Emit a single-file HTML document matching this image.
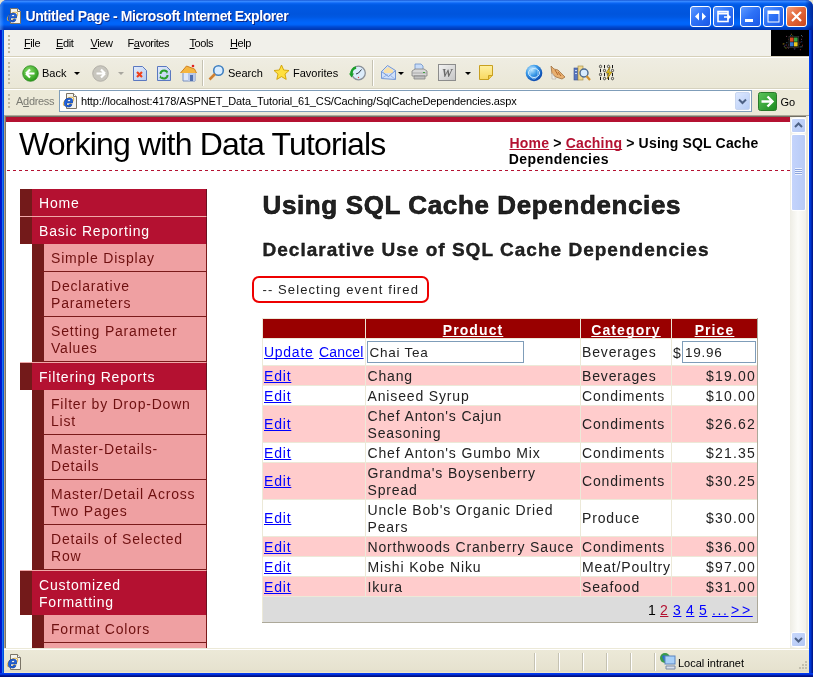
<!DOCTYPE html>
<html><head><meta charset="utf-8">
<style>
*{margin:0;padding:0;box-sizing:border-box}
html,body{width:813px;height:677px;overflow:hidden;background:#e6e3d0;font-family:"Liberation Sans",sans-serif}
.a{position:absolute}
#win{position:absolute;left:0;top:0;width:813px;height:677px;background:#0a3fd6;border-radius:7px 7px 0 0;overflow:hidden;will-change:transform}
#page{left:6px;top:117px;width:784px;height:531px;background:#fff;overflow:hidden;color:#222}
.top{background:linear-gradient(to right,#731a1a 12px,#b41131 12px);color:#fff;border-top:1px solid #f0a8a8;border-right:1px solid #6a1020;padding:6px 0 4px 19px;font-size:14px;line-height:17px;letter-spacing:0.8px;white-space:nowrap}
.nav0 .top:first-child{border-top:0}
.sub{margin-left:12px;background:#efa0a2;color:#6e1010;border-left:12px solid #731a1a;border-bottom:1px solid #7a1a1a;border-right:1px solid #7a1a1a;padding:6px 0 4px 7px;font-size:14px;line-height:17px;letter-spacing:0.8px;white-space:nowrap}
.bcl{color:#b41131;text-decoration:underline}
.th{color:#fff;font-weight:bold;font-size:14px;line-height:15px;text-align:center;letter-spacing:1.1px;white-space:nowrap}
.th u{text-decoration:underline}
.lk{color:#0000ff;text-decoration:underline}
u,a{text-decoration-skip-ink:none}
.inp{border:1px solid #7f9db9;background:#fff}

#title{left:0;top:0;width:813px;height:30px;background:linear-gradient(to bottom,#0a44c8 0px,#3d8eff 1px,#2c80ff 2px,#0c66f4 3px,#0059e4 5px,#0055dd 14px,#0058e2 17px,#0060f2 20px,#0066fc 23px,#0062f6 25px,#0052e0 26px,#0042c4 28px,#0036b0 30px)}
#ttext{left:25.5px;top:9.3px;font:bold 14px/15px "Liberation Sans",sans-serif;color:#fff;text-shadow:1px 1px 0 #0f2a8a;white-space:nowrap;letter-spacing:-0.42px}
.tbtn{top:6px;width:21px;height:21px;border:1px solid #fff;border-radius:3px;background:linear-gradient(135deg,#5f9bff 0%,#2e72f7 45%,#1b58e6 100%)}
#lframe{left:0;top:30px;width:4px;height:647px;background:linear-gradient(to right,#0014c8 0,#0018d0 2px,#1a70f0 2px,#1a70f0 3px,#0050e0 3px)}
#rframe{left:809px;top:30px;width:4px;height:647px;background:linear-gradient(to right,#0040f0 0,#0040f0 1px,#0036d4 1px,#0036d4 2px,#0028b0 2px,#0028b0 3px,#001890 3px)}
#bframe{left:0;top:673px;width:813px;height:4px;background:linear-gradient(to bottom,#0038f0 0,#0038f0 1px,#0030d8 1px,#0030d8 2px,#0018a0 2px,#0018a0 3px,#001080 3px)}
#chrome{left:4px;top:30px;width:805px;height:642px;background:#ece9d8}
.tt{position:absolute;font-size:11px;line-height:13px;color:#000;white-space:nowrap}
.tt u{text-decoration:underline}
.grip{position:absolute;left:8px;width:2px;background:repeating-linear-gradient(to bottom,#bcb6a0 0 2px,transparent 2px 4px)}
.dd{position:absolute;width:0;height:0;border-left:3px solid transparent;border-right:3px solid transparent;border-top:3px solid #000}
.sep{position:absolute;width:2px;background:linear-gradient(to right,#c5c2b2 1px,#fff 1px)}
.ssep{position:absolute;top:653px;width:2px;height:18px;background:linear-gradient(to right,#c5c2b2 1px,#fff 1px)}
</style></head><body>
<div id="win">
<div id="title" class="a"></div>
<svg class="a" style="left:6px;top:8px;" width="16" height="16" viewBox="0 0 16 16"><path d="M4.5 0.5h7l3 3v12h-10z" fill="#f4f3ee" stroke="#7a7466"/><path d="M11.5 0.5v3h3" fill="#fff" stroke="#7a7466"/><ellipse cx="6.5" cy="8.5" rx="6" ry="3" transform="rotate(-35 6.5 8.5)" fill="none" stroke="#e0b040" stroke-width="1"/><text x="6.5" y="13.8" font-family="Liberation Sans" font-weight="bold" font-style="italic" font-size="17" text-anchor="middle" fill="#1f62e0" stroke="#0a3a9a" stroke-width="0.5">e</text></svg>
<div class="a" style="left:805px;top:0;width:8px;height:30px;background:linear-gradient(to right,rgba(0,40,160,0),rgba(0,30,140,0.85))"></div>
<div class="a" style="left:0;top:0;width:4px;height:30px;background:linear-gradient(to right,rgba(120,180,255,0.5),rgba(0,0,0,0))"></div>
<div id="ttext" class="a">Untitled Page - Microsoft Internet Explorer</div>
<div class="a tbtn" style="left:690px"></div>
<div class="a tbtn" style="left:713px"></div>
<div class="a tbtn" style="left:740px"></div>
<div class="a tbtn" style="left:763px"></div>
<div class="a tbtn" style="left:786px;background:linear-gradient(135deg,#f3a080 0%,#e3683a 45%,#c9471c 100%)"></div>
<svg class="a" style="left:690px;top:6px;" width="21" height="21" viewBox="0 0 21 21"><path d="M5 10.5l4-4v8z M16 10.5l-4-4v8z" fill="#fff"/></svg>
<svg class="a" style="left:713px;top:6px;" width="21" height="21" viewBox="0 0 21 21"><rect x="5" y="5.5" width="10" height="10" fill="none" stroke="#fff" stroke-width="1.6"/><path d="M5 7.5h10" stroke="#fff" stroke-width="2"/><path d="M11 11h6M14.5 8.8l2.5 2.2-2.5 2.2" stroke="#fff" stroke-width="1.5" fill="none"/></svg>
<svg class="a" style="left:740px;top:6px;" width="21" height="21" viewBox="0 0 21 21"><rect x="5" y="13" width="8" height="3" fill="#fff"/></svg>
<svg class="a" style="left:763px;top:6px;" width="21" height="21" viewBox="0 0 21 21"><rect x="5" y="5" width="11" height="11" fill="none" stroke="#fff" stroke-width="1"/><rect x="5" y="5" width="11" height="3" fill="#fff"/></svg>
<svg class="a" style="left:786px;top:6px;" width="21" height="21" viewBox="0 0 21 21"><path d="M6 6l9 9M15 6l-9 9" stroke="#fff" stroke-width="2.2"/></svg>
<div id="lframe" class="a"></div><div id="rframe" class="a"></div><div id="bframe" class="a"></div>
<div id="chrome" class="a"></div>
<div class="a" style="left:4px;top:30px;width:805px;height:26px;background:#f1f0ea"></div>
<div class="a" style="left:4px;top:56px;width:805px;height:1px;background:#d6d0ba"></div>
<div class="a" style="left:4px;top:57px;width:805px;height:1px;background:#fff"></div>
<div class="grip" style="top:35px;height:18px"></div>
<div class="tt" style="left:24px;top:37px;letter-spacing:-0.4px"><u>F</u>ile</div>
<div class="tt" style="left:56px;top:37px;letter-spacing:-0.4px"><u>E</u>dit</div>
<div class="tt" style="left:90.5px;top:37px;letter-spacing:-0.4px"><u>V</u>iew</div>
<div class="tt" style="left:127.5px;top:37px;letter-spacing:-0.4px">F<u>a</u>vorites</div>
<div class="tt" style="left:189.5px;top:37px;letter-spacing:-0.4px"><u>T</u>ools</div>
<div class="tt" style="left:230px;top:37px;letter-spacing:-0.4px"><u>H</u>elp</div>
<div class="a" style="left:771px;top:30px;width:38px;height:26px;background:#000"></div>
<svg class="a" style="left:777px;top:31px;" width="26" height="24" viewBox="0 0 26 24"><rect x="17.2" y="17.6" width="1" height="1" fill="#4060c0" opacity="0.7"/><rect x="24.0" y="7.8" width="1" height="1" fill="#a06080" opacity="0.7"/><rect x="21.6" y="12.6" width="1" height="1" fill="#c0a020" opacity="0.7"/><rect x="16.1" y="16.1" width="1" height="1" fill="#60a0c0" opacity="0.7"/><rect x="5.7" y="12.5" width="1" height="1" fill="#c0a020" opacity="0.7"/><rect x="7.6" y="15.9" width="1" height="1" fill="#40a040" opacity="0.7"/><rect x="9.1" y="4.9" width="1" height="1" fill="#a06080" opacity="0.7"/><rect x="12.2" y="13.6" width="1" height="1" fill="#c04040" opacity="0.7"/><rect x="22.9" y="18.2" width="1" height="1" fill="#c04040" opacity="0.7"/><rect x="14.7" y="14.9" width="1" height="1" fill="#4060c0" opacity="0.7"/><rect x="6.4" y="12.3" width="1" height="1" fill="#c0a020" opacity="0.7"/><rect x="13.9" y="2.8" width="1" height="1" fill="#c0a020" opacity="0.7"/><rect x="15.2" y="4.3" width="1" height="1" fill="#40a040" opacity="0.7"/><rect x="20.9" y="7.9" width="1" height="1" fill="#40a040" opacity="0.7"/><rect x="9.3" y="11.2" width="1" height="1" fill="#60a0c0" opacity="0.7"/><rect x="7.6" y="13.7" width="1" height="1" fill="#4060c0" opacity="0.7"/><rect x="6.8" y="14.8" width="1" height="1" fill="#a06080" opacity="0.7"/><rect x="11.0" y="16.5" width="1" height="1" fill="#a06080" opacity="0.7"/><rect x="17.4" y="16.6" width="1" height="1" fill="#c04040" opacity="0.7"/><rect x="24.0" y="4.1" width="1" height="1" fill="#60a0c0" opacity="0.7"/><rect x="13.1" y="4.1" width="1" height="1" fill="#4060c0" opacity="0.7"/><rect x="27.7" y="9.2" width="1" height="1" fill="#a06080" opacity="0.7"/><rect x="24.3" y="15.3" width="1" height="1" fill="#60a0c0" opacity="0.7"/><rect x="21.1" y="5.1" width="1" height="1" fill="#4060c0" opacity="0.7"/><rect x="22.7" y="15.4" width="1" height="1" fill="#60a0c0" opacity="0.7"/><rect x="22.6" y="10.7" width="1" height="1" fill="#c04040" opacity="0.7"/><rect x="11.0" y="13.5" width="1" height="1" fill="#4060c0" opacity="0.7"/><rect x="9.1" y="13.6" width="1" height="1" fill="#c04040" opacity="0.7"/><rect x="25.7" y="12.9" width="1" height="1" fill="#c04040" opacity="0.7"/><rect x="9.8" y="15.7" width="1" height="1" fill="#a06080" opacity="0.7"/><rect x="25.3" y="5.1" width="1" height="1" fill="#a06080" opacity="0.7"/><rect x="17.0" y="15.2" width="1" height="1" fill="#c04040" opacity="0.7"/><rect x="24.9" y="14.2" width="1" height="1" fill="#c04040" opacity="0.7"/><rect x="27.8" y="8.3" width="1" height="1" fill="#4060c0" opacity="0.7"/><rect x="11.5" y="8.0" width="1" height="1" fill="#c04040" opacity="0.7"/><rect x="24.2" y="10.3" width="1" height="1" fill="#4060c0" opacity="0.7"/><rect x="27.5" y="8.9" width="1" height="1" fill="#c0a020" opacity="0.7"/><rect x="8.5" y="16.7" width="1" height="1" fill="#c0a020" opacity="0.7"/><rect x="12" y="5.5" width="9.5" height="11" fill="#000" stroke="#303030" stroke-width="0.8"/><rect x="13" y="6.5" width="3.6" height="4.2" fill="#d84a20"/><rect x="17" y="6.5" width="3.6" height="4.2" fill="#3aa040"/><rect x="13" y="11.2" width="3.6" height="4.2" fill="#3a78d0"/><rect x="17" y="11.2" width="3.6" height="4.2" fill="#e8c820"/></svg>
<div class="a" style="left:4px;top:58px;width:805px;height:30px;background:linear-gradient(to bottom,#efede2,#eae7d6)"></div>
<div class="a" style="left:4px;top:88px;width:805px;height:1px;background:#d6d2bf"></div>
<div class="a" style="left:4px;top:89px;width:805px;height:1px;background:#fff"></div>
<div class="grip" style="top:62px;height:22px"></div>
<svg class="a" style="left:22px;top:65px;" width="17" height="17" viewBox="0 0 17 17"><defs><radialGradient id="gb" cx="40%" cy="35%" r="65%"><stop offset="0" stop-color="#8be06a"/><stop offset="1" stop-color="#2a9a1a"/></radialGradient></defs><circle cx="8.5" cy="8.5" r="7.8" fill="url(#gb)" stroke="#2f8a22" stroke-width="0.8"/><path d="M4 8.5h8.5M4 8.5l4-4M4 8.5l4 4" stroke="#fff" stroke-width="2.2" fill="none"/></svg>
<div class="tt" style="left:42px;top:66.5px">Back</div>
<div class="dd" style="left:74px;top:72px"></div>
<svg class="a" style="left:92px;top:65px;" width="17" height="17" viewBox="0 0 17 17"><circle cx="8.5" cy="8.5" r="7.8" fill="#c8c6be" stroke="#a8a69e" stroke-width="0.8"/><path d="M13 8.5h-8.5M13 8.5l-4-4M13 8.5l-4 4" stroke="#fff" stroke-width="2.2" fill="none"/></svg>
<div class="dd" style="left:118px;top:72px;border-top-color:#a8a69e"></div>
<svg class="a" style="left:132px;top:65px;" width="16" height="17" viewBox="0 0 16 17"><defs><linearGradient id="pg" x1="0" y1="0" x2="1" y2="1"><stop offset="0" stop-color="#e4ecfa"/><stop offset="1" stop-color="#b8ccf0"/></linearGradient></defs><path d="M1.5 1.5h9l4 4v10h-13z" fill="url(#pg)" stroke="#5a78c0"/><path d="M5 7l5 5M10 7l-5 5" stroke="#f0401a" stroke-width="2.2"/></svg>
<svg class="a" style="left:156px;top:65px;" width="16" height="17" viewBox="0 0 16 17"><path d="M1.5 1.5h9l4 4v10h-13z" fill="url(#pg)" stroke="#5a78c0"/><path d="M4.5 9 a3.5 3.5 0 0 1 6 -2.5M11.5 10 a3.5 3.5 0 0 1 -6 2.5" stroke="#2aa02a" stroke-width="2" fill="none"/><path d="M9 5l3 1-1 3z M6.5 14l-3-1 1-3z" fill="#2aa02a"/></svg>
<svg class="a" style="left:180px;top:64px;" width="17" height="18" viewBox="0 0 17 18"><path d="M3 8l5-4 7 4v9h-12z" fill="#dfe8f8" stroke="#7890c0"/><path d="M8 8l7 0v9h-7z" fill="#b8c8ea"/><path d="M0.5 9l6-7 8 3 2 4" fill="#f5b640" stroke="#d08020" stroke-width="1"/><circle cx="13" cy="2" r="1.3" fill="#e02020"/><rect x="10" y="11" width="3" height="6" fill="#5070b0"/></svg>
<div class="sep" style="left:202px;top:60px;height:26px"></div>
<svg class="a" style="left:208px;top:64px;" width="17" height="17" viewBox="0 0 17 17"><circle cx="10.5" cy="6.5" r="4.8" fill="#d8ecff" stroke="#4080c0" stroke-width="1.6"/><path d="M7 10l-5.5 5.5" stroke="#d08030" stroke-width="2.6"/></svg>
<div class="tt" style="left:228px;top:66.5px">Search</div>
<svg class="a" style="left:273px;top:64px;" width="17" height="17" viewBox="0 0 17 17"><path d="M8.5 1l2.2 5 5.3 0.5-4 3.6 1.2 5.3-4.7-2.8-4.7 2.8 1.2-5.3-4-3.6 5.3-0.5z" fill="#ffe040" stroke="#d0a000" stroke-width="0.9"/></svg>
<div class="tt" style="left:293px;top:66.5px">Favorites</div>
<svg class="a" style="left:349px;top:64px;" width="17" height="18" viewBox="0 0 17 18"><circle cx="9.5" cy="9" r="6.8" fill="#dcecfa" stroke="#8a9098" stroke-width="1.3"/><path d="M9.5 9l3-3.5M9.5 9l-2.5 1" stroke="#303a48" stroke-width="1"/><circle cx="9.5" cy="13.5" r="0.7" fill="#e04040"/><path d="M7 3.5a6 6 0 0 0-4.5 6.5" stroke="#1aa02a" stroke-width="2.6" fill="none"/><path d="M0 9.5l5 0-2.5 4z" fill="#1aa02a"/></svg>
<div class="sep" style="left:372px;top:60px;height:26px"></div>
<svg class="a" style="left:380px;top:64px;" width="17" height="17" viewBox="0 0 17 17"><path d="M1.5 7.5l6-6 8 5v9l-14-1z" fill="#cfe0fa" stroke="#6a8ed0" stroke-width="0.9"/><path d="M4 6l4-3 5 3v3h-9z" fill="#f8e0a8"/><path d="M1.5 7.5l7 5 7-6" fill="none" stroke="#6a8ed0" stroke-width="0.9"/><path d="M1.5 14.5l6-4M15.5 15.5l-5-4" stroke="#8aa8e0" stroke-width="0.8"/></svg>
<div class="dd" style="left:398px;top:72px"></div>
<svg class="a" style="left:411px;top:63px;" width="17" height="18" viewBox="0 0 17 18"><path d="M4 1h6l2 2v5h-8z" fill="#c8dcf8" stroke="#6a90c8" stroke-width="0.8"/><path d="M1 8l3-2h9l3 2v5h-15z" fill="#d8d8d8" stroke="#808080" stroke-width="0.8"/><path d="M1 10h15" stroke="#a0a0a0" stroke-width="0.8"/><path d="M3 13h11v3h-11z" fill="#c0c0c0" stroke="#808080" stroke-width="0.8"/><rect x="12" y="9" width="2" height="1" fill="#40a040"/></svg>
<svg class="a" style="left:438px;top:64px;" width="18" height="17" viewBox="0 0 18 17"><defs><linearGradient id="wg" x1="0" y1="0" x2="1" y2="1"><stop offset="0" stop-color="#f4f4f4"/><stop offset="1" stop-color="#c4c4c4"/></linearGradient></defs><rect x="0.5" y="0.5" width="17" height="16" fill="url(#wg)" stroke="#8c8c8c"/><text x="9" y="13" font-family="Liberation Serif" font-style="italic" font-weight="bold" font-size="12" text-anchor="middle" fill="#6a6a6a">W</text></svg>
<div class="dd" style="left:465px;top:72px"></div>
<svg class="a" style="left:478px;top:64px;" width="16" height="17" viewBox="0 0 16 17"><defs><linearGradient id="ng" x1="0" y1="0" x2="0" y2="1"><stop offset="0" stop-color="#fff0a0"/><stop offset="1" stop-color="#f8d860"/></linearGradient></defs><path d="M1.5 1.5h13v10l-4 4h-9z" fill="url(#ng)" stroke="#c8a020"/><path d="M10.5 15.5v-4h4" fill="#f0c840" stroke="#c8a020"/></svg>
<svg class="a" style="left:525px;top:64px;" width="18" height="18" viewBox="0 0 18 18"><defs><radialGradient id="bc" cx="35%" cy="30%" r="70%"><stop offset="0" stop-color="#c8ecff"/><stop offset="0.5" stop-color="#3a9ae8"/><stop offset="1" stop-color="#0a4ab0"/></radialGradient></defs><circle cx="9" cy="9" r="8.3" fill="url(#bc)"/><ellipse cx="9" cy="9" rx="5.5" ry="4.5" fill="none" stroke="#d0ecff" stroke-width="1"/><ellipse cx="9" cy="9" rx="4" ry="6" fill="none" stroke="#a0d4ff" stroke-width="0.8"/></svg>
<svg class="a" style="left:549px;top:64px;" width="17" height="17" viewBox="0 0 17 17"><path d="M2 2l3 3 4 1 4 4 3 3-3 2-6-2-4-3z" fill="#e8b070" stroke="#a07040" stroke-width="0.8"/><path d="M3 9l4 6h-4z" fill="#f4f0e8" stroke="#b0a8a0" stroke-width="0.6"/><path d="M6 6l3 5M9 8l3 4" stroke="#b06020" stroke-width="0.9"/></svg>
<svg class="a" style="left:573px;top:64px;" width="18" height="18" viewBox="0 0 18 18"><rect x="1" y="4" width="4" height="12" fill="#5a78c0" stroke="#3a5090" stroke-width="0.6"/><rect x="5" y="2" width="5" height="14" fill="#f0d890" stroke="#a08840" stroke-width="0.6"/><rect x="2" y="6" width="2" height="1" fill="#c8d8f8"/><rect x="2" y="9" width="2" height="1" fill="#c8d8f8"/><circle cx="11" cy="9" r="4" fill="#d8ecff" stroke="#4a6890" stroke-width="1.4"/><path d="M13.5 12l3.5 4" stroke="#d09030" stroke-width="2.2"/></svg>
<svg class="a" style="left:598px;top:64px;" width="17" height="17" viewBox="0 0 17 17"><ellipse cx="2.5" cy="2.5" rx="1.1" ry="1.3" fill="none" stroke="#111" stroke-width="0.7"/><rect x="6" y="1" width="1" height="3" fill="#111"/><ellipse cx="10.5" cy="2.5" rx="1.1" ry="1.3" fill="none" stroke="#111" stroke-width="0.7"/><rect x="14" y="1" width="1" height="3" fill="#111"/><rect x="2" y="5" width="1" height="3" fill="#111"/><ellipse cx="6.5" cy="6.5" rx="1.1" ry="1.3" fill="none" stroke="#111" stroke-width="0.7"/><rect x="10" y="5" width="1" height="3" fill="#111"/><ellipse cx="14.5" cy="6.5" rx="1.1" ry="1.3" fill="none" stroke="#111" stroke-width="0.7"/><ellipse cx="2.5" cy="10.5" rx="1.1" ry="1.3" fill="none" stroke="#111" stroke-width="0.7"/><rect x="6" y="9" width="1" height="3" fill="#111"/><ellipse cx="10.5" cy="10.5" rx="1.1" ry="1.3" fill="none" stroke="#111" stroke-width="0.7"/><rect x="14" y="9" width="1" height="3" fill="#111"/><rect x="2" y="13" width="1" height="3" fill="#111"/><ellipse cx="6.5" cy="14.5" rx="1.1" ry="1.3" fill="none" stroke="#111" stroke-width="0.7"/><rect x="10" y="13" width="1" height="3" fill="#111"/><ellipse cx="14.5" cy="14.5" rx="1.1" ry="1.3" fill="none" stroke="#111" stroke-width="0.7"/><path d="M12 3l-4 6h3l-2 6 5-7h-3z" fill="#f0d020" stroke="#806000" stroke-width="0.6"/></svg>
<div class="a" style="left:4px;top:90px;width:805px;height:26px;background:#ece9d8"></div>
<div class="grip" style="top:94px;height:15px"></div>
<div class="tt" style="left:16px;top:95px;color:#7a7a72;letter-spacing:-0.3px">A<u>d</u>dress</div>
<div class="a" style="left:59px;top:90px;width:693px;height:22px;background:#fff;border:1px solid #7f9db9"></div>
<svg class="a" style="left:62px;top:93px;" width="16" height="16" viewBox="0 0 16 16"><path d="M4.5 0.5h7l3 3v12h-10z" fill="#f4f3ee" stroke="#7a7466"/><path d="M11.5 0.5v3h3" fill="#fff" stroke="#7a7466"/><ellipse cx="6.5" cy="8.5" rx="6" ry="3" transform="rotate(-35 6.5 8.5)" fill="none" stroke="#e0b040" stroke-width="1"/><text x="6.5" y="13.8" font-family="Liberation Sans" font-weight="bold" font-style="italic" font-size="17" text-anchor="middle" fill="#1f62e0" stroke="#0a3a9a" stroke-width="0.5">e</text></svg>
<div class="tt" style="left:81px;top:95px;letter-spacing:-0.15px">http://localhost:4178/ASPNET_Data_Tutorial_61_CS/Caching/SqlCacheDependencies.aspx</div>
<div class="a" style="left:735px;top:92px;width:15px;height:18px;border-radius:2px;background:linear-gradient(135deg,#dce8ff,#b8cdf6);border:1px solid #c8d6f0"></div>
<svg class="a" style="left:735px;top:92px;" width="15" height="18" viewBox="0 0 15 18"><path d="M4 7.5l3.5 3.5 3.5-3.5" stroke="#4d6185" stroke-width="2" fill="none"/></svg>
<svg class="a" style="left:758px;top:92px;" width="19" height="19" viewBox="0 0 19 19"><defs><linearGradient id="go" x1="0" y1="0" x2="1" y2="1"><stop offset="0" stop-color="#5cc45a"/><stop offset="1" stop-color="#1a8a1e"/></linearGradient></defs><rect x="0.5" y="0.5" width="18" height="18" rx="2" fill="url(#go)" stroke="#2a7a2a"/><path d="M3.5 9.5h10.5M9.5 4.5l5 5-5 5" stroke="#fff" stroke-width="2.4" fill="none"/></svg>
<div class="tt" style="left:780.5px;top:95.5px;font-size:11px">Go</div>
<div class="a" style="left:4px;top:112px;width:805px;height:4px;background:#ece9d8"></div>
<div class="a" style="left:4px;top:115px;width:805px;height:1px;background:#aca899"></div>
<div class="a" style="left:4px;top:116px;width:1px;height:533px;background:#b0a488"></div>
<div class="a" style="left:5px;top:116px;width:804px;height:1px;background:#716f64"></div>
<div class="a" style="left:5px;top:116px;width:1px;height:532px;background:#7a766a"></div>
<div class="a" style="left:790px;top:117px;width:16px;height:531px;background:linear-gradient(to right,#eeede5,#fcfcf9 50%,#f2f1ea)"></div>
<div class="a" style="left:806px;top:116px;width:3px;height:533px;background:linear-gradient(to right,#eae6d8 0,#eae6d8 2px,#fffef0 2px)"></div>
<div class="a" style="left:791px;top:118px;width:15px;height:15px;border-radius:2px;border:1px solid #fff;background:linear-gradient(135deg,#c8d8fc,#b4c8f4)"></div>
<svg class="a" style="left:791px;top:118px;" width="15" height="15" viewBox="0 0 15 15"><path d="M4 9l3.5-3.5 3.5 3.5" stroke="#4d6185" stroke-width="2" fill="none"/></svg>
<div class="a" style="left:791px;top:134px;width:15px;height:77px;border-radius:2px;border:1px solid #fff;background:linear-gradient(to right,#c4d4fc,#b8cbf6)"></div>
<div class="a" style="left:795px;top:168px;width:7px;height:7px;background:repeating-linear-gradient(to bottom,#eef3ff 0 1px,#8ca4dc 1px 2px)"></div>
<div class="a" style="left:791px;top:632px;width:15px;height:15px;border-radius:2px;border:1px solid #fff;background:linear-gradient(135deg,#c8d8fc,#b4c8f4)"></div>
<svg class="a" style="left:791px;top:632px;" width="15" height="15" viewBox="0 0 15 15"><path d="M4 6l3.5 3.5 3.5-3.5" stroke="#4d6185" stroke-width="2" fill="none"/></svg>
<div class="a" style="left:4px;top:648px;width:805px;height:1px;background:#ece9d8"></div>
<div class="a" style="left:4px;top:649px;width:805px;height:1px;background:#fff"></div>
<div class="a" style="left:4px;top:650px;width:805px;height:23px;background:linear-gradient(to bottom,#ece9d8,#e6e2cf 20px,#d8d4c0 21px,#ece4c8 22px)"></div>
<svg class="a" style="left:6px;top:654px;" width="16" height="16" viewBox="0 0 16 16"><path d="M4.5 0.5h7l3 3v12h-10z" fill="#f4f3ee" stroke="#7a7466"/><path d="M11.5 0.5v3h3" fill="#fff" stroke="#7a7466"/><ellipse cx="6.5" cy="8.5" rx="6" ry="3" transform="rotate(-35 6.5 8.5)" fill="none" stroke="#e0b040" stroke-width="1"/><text x="6.5" y="13.8" font-family="Liberation Sans" font-weight="bold" font-style="italic" font-size="17" text-anchor="middle" fill="#1f62e0" stroke="#0a3a9a" stroke-width="0.5">e</text></svg>
<div class="ssep" style="left:534px"></div>
<div class="ssep" style="left:558px"></div>
<div class="ssep" style="left:582px"></div>
<div class="ssep" style="left:606px"></div>
<div class="ssep" style="left:630px"></div>
<div class="ssep" style="left:654px"></div>
<svg class="a" style="left:659px;top:652px;" width="18" height="18" viewBox="0 0 18 18"><circle cx="6" cy="6" r="5" fill="#3a9a4a"/><path d="M3 4q3-2 5 1t-3 4" fill="#2a70d0"/><rect x="6" y="4" width="10" height="8" fill="#a8d0f8" stroke="#5a84c0"/><path d="M7 14h9v3h-9z" fill="#d8e0ec" stroke="#7a8aa4"/></svg>
<div class="tt" style="left:678px;top:657px">Local intranet</div>
<svg class="a" style="left:797px;top:661px;" width="11" height="9" viewBox="0 0 11 9"><rect x="8" y="0" width="2" height="2" fill="#c2bfae"/><rect x="5" y="3" width="2" height="2" fill="#c2bfae"/><rect x="8" y="3" width="2" height="2" fill="#c2bfae"/><rect x="2" y="6" width="2" height="2" fill="#c2bfae"/><rect x="5" y="6" width="2" height="2" fill="#c2bfae"/><rect x="8" y="6" width="2" height="2" fill="#c2bfae"/></svg>
<div id="page" class="a">
<div class="a" style="left:0;top:0;width:784px;height:5px;background:#b41131"></div>
<div class="a" style="left:13px;top:10.91px;font-size:32px;line-height:32px;color:#000;white-space:nowrap;letter-spacing:-0.83px">Working with Data Tutorials</div>
<div class="a" style="left:503.5px;top:18.15px;font-size:14px;line-height:16px;font-weight:bold;white-space:nowrap;color:#000"><span style="letter-spacing:0.18px"><a class="bcl">Home</a> &gt; <a class="bcl">Caching</a> &gt; Using SQL Cache</span><br><span style="letter-spacing:0.44px;position:relative;left:-0.8px">Dependencies</span></div>
<div class="a" style="left:1px;top:53px;width:783px;height:1px;background:repeating-linear-gradient(to right,#b41131 0 3px,transparent 3px 6px)"></div>
<div class="a nav0" style="left:14px;top:72px;width:187px">
<div class="top">Home</div>
<div class="top">Basic Reporting</div>
<div class="sub">Simple Display</div>
<div class="sub">Declarative<br>Parameters</div>
<div class="sub">Setting Parameter<br>Values</div>
<div class="top">Filtering Reports</div>
<div class="sub">Filter by Drop-Down<br>List</div>
<div class="sub">Master-Details-<br>Details</div>
<div class="sub">Master/Detail Across<br>Two Pages</div>
<div class="sub">Details of Selected<br>Row</div>
<div class="top">Customized<br>Formatting</div>
<div class="sub">Format Colors</div>
<div class="sub">Custom Formatting<br>Based Upon Data</div>
</div>
<div class="a" style="left:256.5px;top:74.99px;font-size:26px;line-height:26px;font-weight:bold;letter-spacing:0.62px;white-space:nowrap;-webkit-text-stroke:0.6px #000">Using SQL Cache Dependencies</div>
<div class="a" style="left:256.5px;top:122.92px;font-size:19px;line-height:19px;font-weight:bold;letter-spacing:1.02px;white-space:nowrap;-webkit-text-stroke:0.35px #000">Declarative Use of SQL Cache Dependencies</div>
<div class="a" style="left:246px;top:159px;width:177px;height:27px;border:2px solid #ee0000;border-radius:7px"></div>
<div class="a" style="left:256.5px;top:165.00px;font-size:13px;line-height:15px;letter-spacing:1.1px;white-space:nowrap">-- Selecting event fired</div>
<div class="a" style="left:256px;top:202px;width:495px;height:19px;background:#990000"></div>
<div class="a" style="left:256px;top:222px;width:495px;height:26px;background:#ffffff"></div>
<div class="a" style="left:256px;top:249px;width:495px;height:19px;background:#ffcccc"></div>
<div class="a" style="left:256px;top:269px;width:495px;height:19px;background:#ffffff"></div>
<div class="a" style="left:256px;top:289px;width:495px;height:36px;background:#ffcccc"></div>
<div class="a" style="left:256px;top:326px;width:495px;height:19px;background:#ffffff"></div>
<div class="a" style="left:256px;top:346px;width:495px;height:36px;background:#ffcccc"></div>
<div class="a" style="left:256px;top:383px;width:495px;height:36px;background:#ffffff"></div>
<div class="a" style="left:256px;top:420px;width:495px;height:19px;background:#ffcccc"></div>
<div class="a" style="left:256px;top:440px;width:495px;height:19px;background:#ffffff"></div>
<div class="a" style="left:256px;top:460px;width:495px;height:19px;background:#ffcccc"></div>
<div class="a" style="left:256px;top:480px;width:495px;height:25px;background:#dcdcdc"></div>
<div class="a" style="left:256px;top:201px;width:495px;height:1px;background:#ece9d8"></div>
<div class="a" style="left:256px;top:221px;width:495px;height:1px;background:#ece9d8"></div>
<div class="a" style="left:256px;top:248px;width:495px;height:1px;background:#ece9d8"></div>
<div class="a" style="left:256px;top:268px;width:495px;height:1px;background:#ece9d8"></div>
<div class="a" style="left:256px;top:288px;width:495px;height:1px;background:#ece9d8"></div>
<div class="a" style="left:256px;top:325px;width:495px;height:1px;background:#ece9d8"></div>
<div class="a" style="left:256px;top:345px;width:495px;height:1px;background:#ece9d8"></div>
<div class="a" style="left:256px;top:382px;width:495px;height:1px;background:#ece9d8"></div>
<div class="a" style="left:256px;top:419px;width:495px;height:1px;background:#ece9d8"></div>
<div class="a" style="left:256px;top:439px;width:495px;height:1px;background:#ece9d8"></div>
<div class="a" style="left:256px;top:459px;width:495px;height:1px;background:#ece9d8"></div>
<div class="a" style="left:256px;top:479px;width:495px;height:1px;background:#ece9d8"></div>
<div class="a" style="left:359px;top:201px;width:1px;height:278px;background:#ece9d8"></div>
<div class="a" style="left:574px;top:201px;width:1px;height:278px;background:#ece9d8"></div>
<div class="a" style="left:665px;top:201px;width:1px;height:278px;background:#ece9d8"></div>
<div class="a" style="left:256px;top:201px;width:1px;height:304px;background:#ece9d8"></div>
<div class="a" style="left:751px;top:201px;width:1px;height:305px;background:#aca899"></div>
<div class="a" style="left:256px;top:505px;width:496px;height:1px;background:#aca899"></div>
<div class="a th" style="left:360px;top:205.62px;width:214px"><u>Product</u></div>
<div class="a th" style="left:575px;top:205.62px;width:90px"><u>Category</u></div>
<div class="a th" style="left:666px;top:205.62px;width:85px"><u>Price</u></div>
<div class="a" style="left:258px;top:226.95px;font-size:14px;line-height:17px;white-space:nowrap;letter-spacing:0.85px;letter-spacing:0.73px"><u class="lk">Update</u></div>
<div class="a" style="left:313px;top:226.95px;font-size:14px;line-height:17px;white-space:nowrap;letter-spacing:0.85px;letter-spacing:0.17px"><u class="lk">Cancel</u></div>
<div class="a inp" style="left:361px;top:224px;width:157px;height:22px"></div>
<div class="a" style="left:363.5px;top:227.12px;font-size:13.5px;line-height:17px;white-space:nowrap;letter-spacing:0.75px">Chai Tea</div>
<div class="a" style="left:576px;top:226.95px;font-size:14px;line-height:17px;white-space:nowrap;letter-spacing:0.85px;">Beverages</div>
<div class="a" style="left:667px;top:227.95px;font-size:14px;line-height:17px;white-space:nowrap;letter-spacing:0.85px;">$</div>
<div class="a inp" style="left:676px;top:224px;width:74px;height:22px"></div>
<div class="a" style="left:679px;top:227.12px;font-size:13.5px;line-height:17px;white-space:nowrap;letter-spacing:0.73px">19.96</div>
<div class="a" style="left:258px;top:250.65px;font-size:14px;line-height:17px;white-space:nowrap;letter-spacing:0.85px;letter-spacing:0.8px"><u class="lk">Edit</u></div>
<div class="a" style="left:361.5px;top:250.65px;font-size:14px;line-height:17px;white-space:nowrap;letter-spacing:0.85px;">Chang</div>
<div class="a" style="left:576px;top:250.65px;font-size:14px;line-height:17px;white-space:nowrap;letter-spacing:0.85px;">Beverages</div>
<div class="a" style="left:666px;top:250.65px;width:84px;text-align:right;font-size:14px;line-height:17px;letter-spacing:1.2px;white-space:nowrap">$19.00</div>
<div class="a" style="left:258px;top:270.65px;font-size:14px;line-height:17px;white-space:nowrap;letter-spacing:0.85px;letter-spacing:0.8px"><u class="lk">Edit</u></div>
<div class="a" style="left:361.5px;top:270.65px;font-size:14px;line-height:17px;white-space:nowrap;letter-spacing:0.85px;">Aniseed Syrup</div>
<div class="a" style="left:576px;top:270.65px;font-size:14px;line-height:17px;white-space:nowrap;letter-spacing:0.85px;">Condiments</div>
<div class="a" style="left:666px;top:270.65px;width:84px;text-align:right;font-size:14px;line-height:17px;letter-spacing:1.2px;white-space:nowrap">$10.00</div>
<div class="a" style="left:258px;top:299.15px;font-size:14px;line-height:17px;white-space:nowrap;letter-spacing:0.85px;letter-spacing:0.8px"><u class="lk">Edit</u></div>
<div class="a" style="left:361.5px;top:291.15px;font-size:14px;line-height:17px;white-space:nowrap;letter-spacing:0.85px">Chef Anton's Cajun<br>Seasoning</div>
<div class="a" style="left:576px;top:299.15px;font-size:14px;line-height:17px;white-space:nowrap;letter-spacing:0.85px;">Condiments</div>
<div class="a" style="left:666px;top:299.15px;width:84px;text-align:right;font-size:14px;line-height:17px;letter-spacing:1.2px;white-space:nowrap">$26.62</div>
<div class="a" style="left:258px;top:327.65px;font-size:14px;line-height:17px;white-space:nowrap;letter-spacing:0.85px;letter-spacing:0.8px"><u class="lk">Edit</u></div>
<div class="a" style="left:361.5px;top:327.65px;font-size:14px;line-height:17px;white-space:nowrap;letter-spacing:0.85px;">Chef Anton's Gumbo Mix</div>
<div class="a" style="left:576px;top:327.65px;font-size:14px;line-height:17px;white-space:nowrap;letter-spacing:0.85px;">Condiments</div>
<div class="a" style="left:666px;top:327.65px;width:84px;text-align:right;font-size:14px;line-height:17px;letter-spacing:1.2px;white-space:nowrap">$21.35</div>
<div class="a" style="left:258px;top:356.15px;font-size:14px;line-height:17px;white-space:nowrap;letter-spacing:0.85px;letter-spacing:0.8px"><u class="lk">Edit</u></div>
<div class="a" style="left:361.5px;top:348.15px;font-size:14px;line-height:17px;white-space:nowrap;letter-spacing:0.85px">Grandma's Boysenberry<br>Spread</div>
<div class="a" style="left:576px;top:356.15px;font-size:14px;line-height:17px;white-space:nowrap;letter-spacing:0.85px;">Condiments</div>
<div class="a" style="left:666px;top:356.15px;width:84px;text-align:right;font-size:14px;line-height:17px;letter-spacing:1.2px;white-space:nowrap">$30.25</div>
<div class="a" style="left:258px;top:393.15px;font-size:14px;line-height:17px;white-space:nowrap;letter-spacing:0.85px;letter-spacing:0.8px"><u class="lk">Edit</u></div>
<div class="a" style="left:361.5px;top:385.15px;font-size:14px;line-height:17px;white-space:nowrap;letter-spacing:0.85px">Uncle Bob's Organic Dried<br>Pears</div>
<div class="a" style="left:576px;top:393.15px;font-size:14px;line-height:17px;white-space:nowrap;letter-spacing:0.85px;">Produce</div>
<div class="a" style="left:666px;top:393.15px;width:84px;text-align:right;font-size:14px;line-height:17px;letter-spacing:1.2px;white-space:nowrap">$30.00</div>
<div class="a" style="left:258px;top:421.65px;font-size:14px;line-height:17px;white-space:nowrap;letter-spacing:0.85px;letter-spacing:0.8px"><u class="lk">Edit</u></div>
<div class="a" style="left:361.5px;top:421.65px;font-size:14px;line-height:17px;white-space:nowrap;letter-spacing:0.85px;">Northwoods Cranberry Sauce</div>
<div class="a" style="left:576px;top:421.65px;font-size:14px;line-height:17px;white-space:nowrap;letter-spacing:0.85px;">Condiments</div>
<div class="a" style="left:666px;top:421.65px;width:84px;text-align:right;font-size:14px;line-height:17px;letter-spacing:1.2px;white-space:nowrap">$36.00</div>
<div class="a" style="left:258px;top:441.65px;font-size:14px;line-height:17px;white-space:nowrap;letter-spacing:0.85px;letter-spacing:0.8px"><u class="lk">Edit</u></div>
<div class="a" style="left:361.5px;top:441.65px;font-size:14px;line-height:17px;white-space:nowrap;letter-spacing:0.85px;">Mishi Kobe Niku</div>
<div class="a" style="left:576px;top:441.65px;font-size:14px;line-height:17px;white-space:nowrap;letter-spacing:0.85px;">Meat/Poultry</div>
<div class="a" style="left:666px;top:441.65px;width:84px;text-align:right;font-size:14px;line-height:17px;letter-spacing:1.2px;white-space:nowrap">$97.00</div>
<div class="a" style="left:258px;top:461.65px;font-size:14px;line-height:17px;white-space:nowrap;letter-spacing:0.85px;letter-spacing:0.8px"><u class="lk">Edit</u></div>
<div class="a" style="left:361.5px;top:461.65px;font-size:14px;line-height:17px;white-space:nowrap;letter-spacing:0.85px;">Ikura</div>
<div class="a" style="left:576px;top:461.65px;font-size:14px;line-height:17px;white-space:nowrap;letter-spacing:0.85px;">Seafood</div>
<div class="a" style="left:666px;top:461.65px;width:84px;text-align:right;font-size:14px;line-height:17px;letter-spacing:1.2px;white-space:nowrap">$31.00</div>
<div class="a" style="left:642px;top:484.65px;font-size:14px;line-height:17px;color:#000;white-space:nowrap;letter-spacing:0.6px;">1</div>
<div class="a" style="left:654px;top:484.65px;font-size:14px;line-height:17px;color:#b41131;white-space:nowrap;letter-spacing:0.6px;text-decoration:underline">2</div>
<div class="a" style="left:667px;top:484.65px;font-size:14px;line-height:17px;color:#0000ff;white-space:nowrap;letter-spacing:0.6px;text-decoration:underline">3</div>
<div class="a" style="left:680px;top:484.65px;font-size:14px;line-height:17px;color:#0000ff;white-space:nowrap;letter-spacing:0.6px;text-decoration:underline">4</div>
<div class="a" style="left:693px;top:484.65px;font-size:14px;line-height:17px;color:#0000ff;white-space:nowrap;letter-spacing:0.6px;text-decoration:underline">5</div>
<div class="a" style="left:706px;top:484.65px;font-size:14px;line-height:17px;color:#0000ff;white-space:nowrap;letter-spacing:1.6px;text-decoration:underline">...</div>
<div class="a" style="left:725px;top:484.65px;font-size:14px;line-height:17px;color:#0000ff;white-space:nowrap;letter-spacing:2.7px;text-decoration:underline">&gt;&gt;</div>
</div>
</div>
</body></html>
